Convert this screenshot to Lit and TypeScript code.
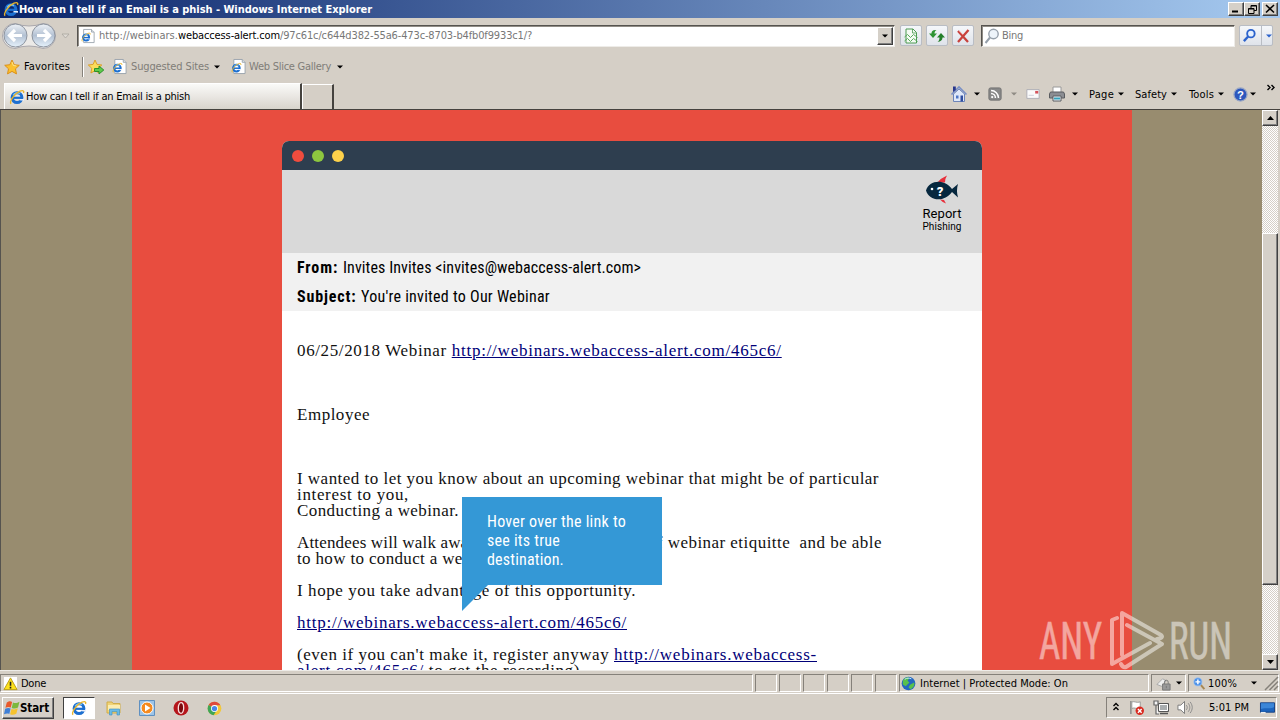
import { LitElement, html, svg, css, unsafeCSS } from 'lit';
import { customElement, property } from 'lit/decorators.js';
import { styleMap } from 'lit/directives/style-map.js';

const FONTS = {
  ui: '11px "DejaVu Sans Condensed", "DejaVu Sans", sans-serif',
  uiBold: 'bold 11px "DejaVu Sans Condensed", "DejaVu Sans", sans-serif',
  startFont: 'bold 11.5px "DejaVu Sans Condensed", "DejaVu Sans", sans-serif',
  mail: '16px "Roboto Condensed", "Liberation Sans Narrow", Roboto, sans-serif',
  mailBold: 'bold 16px "Roboto Condensed", "Liberation Sans Narrow", Roboto, sans-serif',
  serif: '17px "Liberation Serif", serif',
  roboto: '13px Roboto, sans-serif',
  robotoSmall: '10px Roboto, sans-serif',
};

type FontName = keyof typeof FONTS;

const ctx = document.createElement('canvas').getContext('2d')!;

// Text set to an exact width by spreading the difference over its letters.
const fit = (text: string, width: number, font: FontName = 'ui', cls = '') => {
  ctx.font = FONTS[font];
  const spacing = (width - ctx.measureText(text).width) / text.length;
  return html`<span
    class="fit ${font} ${cls}"
    style=${styleMap({ letterSpacing: `${spacing.toFixed(3)}px` })}
    >${text}</span
  >`;
};

// A slot of a toolbar row: fixed width, content at its left edge.
const cell = (width: number, content: unknown = '') =>
  html`<span class="cell" style=${styleMap({ width: `${width}px` })}>${content}</span>`;

const ieMark = svg`
  <circle cx="8" cy="8.600" r="4.900" fill="none" stroke="#1c6fd0" stroke-width="3" />
  <path d="M4 8.800h9" stroke="#1c6fd0" stroke-width="2.200" />
  <path d="M10.500 10.100h4.500v1.600l-4.500-.4z" fill="#e8eefa" />
  <path d="M4.200 6.400A4.800 4.800 0 0 1 11 4.600" fill="none" stroke="#7cc4f5" stroke-width="1.400" />
  <path d="M2 14.800C.2 12.500 5 4.800 11 2.200c2.700-1.200 4.500-.5 3.500 1.800" fill="none" stroke="#e9b52c" stroke-width="1.400" />`;

const ICONS = {
  ie: ieMark,
  iePage: svg`
    <path d="M3 .5h9l3 3v12H3z" fill="#fff" stroke="#9aa3ad" />
    <path d="M12 .5v3h3" fill="#dfe6ee" stroke="#9aa3ad" />
    <g transform="translate(0 3.500) scale(.72)">${ieMark}</g>`,
  star: svg`<path d="M8 1l2.200 4.700 5.100.6-3.800 3.500 1 5.100L8 12.400l-4.500 2.500 1-5.100L.7 6.300l5.100-.6z" fill="#fbc02e" stroke="#d98a10" stroke-width=".9" /><path d="M8 3l1.300 3.500 3 .4" fill="none" stroke="#fde38a" />`,
  starAdd: svg`
    <path d="M7 1l2 4.400 4.800.6-3.600 3.300.9 4.700L7 11.700 2.900 14l.9-4.700L.3 6l4.800-.6z" fill="#fbdc5a" stroke="#d99a20" stroke-width=".9" />
    <path d="M6.500 9.500h4.500V7l4.800 4-4.800 4v-2.500H6.500z" fill="#5fca4c" stroke="#218a22" stroke-width=".9" />`,
  compat: svg`
    <path d="M3 1h7l3.500 3.500V15H3z" fill="#f4fbf3" stroke="#4c9a52" />
    <path d="M9.500 1v4h4" fill="none" stroke="#4c9a52" stroke-width=".8" />
    <path d="M1.500 9l3-2.500 3 3 3-3 4 3M1.500 13l3-2.500 3 3 3-3 4 3" fill="none" stroke="#58a95d" />`,
  refresh: svg`
    <path d="M0 5.500L4 10l4-4.500H5.500c0-2 1-3 2-3.500C4 1.500 2.500 3 2.500 5.500z" fill="#2f9434" />
    <path d="M16 9.500L12 5 8 9.500h2.500c0 2.500-.6 3.500-2 4.500 3.400-.5 5-2 5-4.500z" fill="#247f2a" />`,
  stop: svg`<path d="M3 3l10 11M13.500 2L3 14" stroke="#c8423d" stroke-width="2.300" fill="none" /><path d="M4 3l4 4" stroke="#ec8d87" />`,
  lens: svg`
    <circle cx="9.500" cy="6" r="4.700" fill="#eef4fa" stroke="#96a0ab" stroke-width="1.400" />
    <path d="M6 9.500L1.500 15" stroke="#96a0ab" stroke-width="2" />`,
  lensBlue: svg`
    <circle cx="9.500" cy="6" r="4" fill="#e5f0ff" stroke="#2b62cc" stroke-width="2" />
    <path d="M6.500 9L2 14" stroke="#2b62cc" stroke-width="2.500" />`,
  home: svg`
    <path d="M2.500 8v7.500h11V8L8 3z" fill="#dfe8f8" stroke="#6d84b8" />
    <path d="M.5 8.500L8 1l7.500 7.500" fill="none" stroke="#7990c6" stroke-width="1.600" />
    <path d="M2 .5h2.800V4L2 6z" fill="#27378d" />
    <path d="M5 9.500h2.500v3H5z" fill="#4e77c5" /><path d="M9.500 9.500H12v6H9.500z" fill="#2f4da0" />`,
  rss: svg`
    <rect x="1" y="1" width="14" height="14" rx="2" fill="#898989" stroke="#6d6d6d" />
    <circle cx="4.800" cy="11.500" r="1.300" fill="#fff" />
    <path d="M3.500 7.500a5 5 0 0 1 5 5M3.500 4a8.500 8.500 0 0 1 8.500 8.500" fill="none" stroke="#fff" stroke-width="1.700" />`,
  mail: svg`
    <path d="M1 3h14v10H1z" fill="#fafafa" stroke="#a9a9b2" />
    <path d="M10.500 4.500H14v3h-3.500z" fill="#d4525a" /><path d="M3 9.500h6" stroke="#c9ccd6" />`,
  print: svg`
    <path d="M4 1h8v6H4z" fill="#fff" stroke="#999" />
    <path d="M1.500 6h13l1 2v4H.5V8z" fill="#8b8d92" stroke="#5a5c60" />
    <path d="M4 10h8v5H4z" fill="#eaf4fb" stroke="#5a5c60" /><path d="M5 12.500h6" stroke="#35a0b8" stroke-width="2" />`,
  help: svg`
    <circle cx="8" cy="8" r="7" fill="#2d57bd" stroke="#9aa7c4" stroke-width="1.300" />
    <text x="8" y="12.500" text-anchor="middle" font-size="12" font-weight="bold" fill="#fff" font-family="Liberation Sans">?</text>`,
  warn: svg`
    <path d="M1 1h14v14H1z" fill="#fff" /><path d="M8 2l7 12.500H1z" fill="#fde11c" stroke="#b99a10" />
    <path d="M8 6v4.500M8 11.500v1.800" stroke="#222" stroke-width="1.700" />`,
  globe: svg`
    <circle cx="8" cy="8" r="7.300" fill="#2467c0" />
    <path d="M2 5c2-4 6-4 7-3l-2 3 2 2-4 4-3-2zM10 9l4-2c1 3-1 6-4 7l-2-2z" fill="#58c14b" />
    <path d="M4 3.500C6 2 9 2 11 3" stroke="#c9ecff" fill="none" />`,
  lock: svg`
    <path d="M1 9l6-6 4 2-5 6z" fill="#eee" stroke="#a4a4a4" />
    <path d="M7 8.500h8V15H7z" fill="#999" stroke="#777" /><path d="M9 8.500V6.500a2 2 0 0 1 4 0v2M11 10.500v2.500" fill="none" stroke="#777" />`,
  zoom: svg`
    <path d="M9 9l5 6" stroke="#a88855" stroke-width="2.400" />
    <circle cx="6" cy="6" r="5" fill="#4c91e8" stroke="#a5c4ea" />
    <path d="M6 3v6M3 6h6" stroke="#fff" stroke-width="1.800" />`,
  flagWin: svg`
    <path d="M2.800 2.500c2.500-1.700 4-1.300 5.300-.6L6.800 7.500c-1.800-.8-3.300-.7-5.400.3z" fill="#e8592b" />
    <path d="M9 2.500c2 .8 4 .8 6.500-.8L14 7.400c-2 1.300-4 1.500-6.300.5z" fill="#7cb83c" />
    <path d="M1.200 8.800c2.200-1 3.700-1 5.400-.3l-1.300 5.400c-1.900-.8-3.400-.6-5.300.4z" fill="#3f7fd6" />
    <path d="M7.500 8.900c2.200.8 4.200.6 6.300-.6l-1.500 5.400c-2.200 1.300-4.200 1.300-6.200.5z" fill="#f6c32e" />`,
  folder: svg`
    <path d="M1 2h5l1 1.500h7V13H1z" fill="#f0d377" stroke="#d0ad49" />
    <path d="M2 5h12v5H2z" fill="#fbedb2" />
    <path d="M3.500 15V9h10v6h-2.500v-3.500H6V15z" fill="#6bbbe6" stroke="#3a8fc2" stroke-width=".6" />`,
  media: svg`
    <path d="M.5.5h15v15H.5z" fill="#9cc4e8" stroke="#5f90c1" />
    <circle cx="8" cy="8" r="6" fill="#f58a1f" stroke="#fff" /><path d="M6 4.500l5.500 3.500L6 11.500z" fill="#fff" />`,
  opera: svg`
    <circle cx="8" cy="8" r="7.500" fill="#b5161b" />
    <ellipse cx="8" cy="8" rx="2.700" ry="5.300" fill="#7b090c" stroke="#f9dede" stroke-width="1.300" />`,
  chrome: svg`
    <circle cx="8" cy="8" r="7.300" fill="#f2c83a" />
    <path d="M8 8L1.700 4.300A7.300 7.300 0 0 1 14.300 4.500H8z" fill="#df4a3c" />
    <path d="M8 8L1.700 4.300A7.300 7.300 0 0 0 7 15.200l3.500-5.500z" fill="#3fa556" />
    <circle cx="8" cy="8" r="3.700" fill="#fff" /><circle cx="8" cy="8" r="2.800" fill="#4a86e8" />`,
  chevronUp: svg`<path d="M5.500 6L8 3.500 10.500 6M5.500 10L8 7.500l2.500 2.500" fill="none" stroke="#000" stroke-width="1.400" />`,
  flag: svg`
    <path d="M2 1v14" stroke="#888" stroke-width="1.500" />
    <path d="M3 2c3-1 5 1.500 9 0v7c-4 1-6-1.500-9 0z" fill="#fff" stroke="#999" />
    <circle cx="11.500" cy="11.500" r="4.500" fill="#d92a20" /><path d="M9.500 9.500l4 4M13.500 9.500l-4 4" stroke="#fff" stroke-width="1.500" />`,
  network: svg`
    <path d="M5.500 3.500h10v8h-10z" fill="#a9adaf" stroke="#555" /><path d="M6.500 4.500h8v6h-8z" fill="none" stroke="#fff" />
    <path d="M1 1v4h4V1zM3 5v9h3" fill="#f4f4f4" stroke="#666" stroke-width="1.200" /><path d="M7 13.500h8" stroke="#555" stroke-width="1.500" />`,
  volume: svg`
    <path d="M1 5.500h3L8 1.500v13l-4-4H1z" fill="#fff" stroke="#777" />
    <path d="M10 5.500c1.200 1.500 1.200 3.500 0 5M12 3.500c2.200 3 2.200 6 0 9M14 2c3 4 3 8 0 12" fill="none" stroke="#888" />`,
  desktop: svg`
    <path d="M.5 3h15v10H.5z" fill="#1c64bd" stroke="#123e82" />
    <path d="M1 3.500h14v4c-5 3-9 0-14 2z" fill="#3b86d8" /><path d="M1 13.500h5" stroke="#eee" stroke-width="1.500" />`,
};

type IconName = keyof typeof ICONS;

const icon = (name: IconName, size = 16) =>
  html`<svg class="icon" width=${size} height=${size} viewBox="0 0 16 16">${ICONS[name]}</svg>`;

const arrow = (fill = '#000') =>
  html`<svg class="icon" width="6" height="4" viewBox="0 0 6 4"><path d="M0 .5h6L3 3.500z" fill=${fill} /></svg>`;

const textStyles = css`
  .fit {
    white-space: pre;
    flex: none;
  }

  .cell {
    display: flex;
    align-items: center;
    flex: none;
  }

  .icon {
    display: block;
    flex: none;
    overflow: visible;
  }

  .raised {
    box-sizing: border-box;
    background: #d5d0c8;
    border: 1px solid;
    border-color: #fff #404040 #404040 #fff;
    box-shadow: inset -1px -1px 0 #808080;
    display: flex;
    align-items: center;
    justify-content: center;
    flex: none;
  }

  ${unsafeCSS(
    Object.entries(FONTS)
      .map(([name, font]) => `.${name} { font: ${font}; }`)
      .join('\n')
  )}
`;

@customElement('browser-chrome')
export class BrowserChrome extends LitElement {
  static styles = [
    textStyles,
    css`
      :host {
        display: block;
        height: 110px;
        background: #d5cfc6;
      }

      .title {
        height: 18px;
        display: flex;
        align-items: center;
        padding: 0 2px 0 3px;
        color: #fff;
        background: linear-gradient(90deg, #0a246a, #a6caf0);
      }

      .grow {
        flex: 1;
      }

      .win {
        width: 16px;
        height: 14px;
      }

      .win.close {
        margin-left: 2px;
      }

      .nav {
        height: 35px;
        display: flex;
        align-items: center;
      }

      .box {
        box-sizing: border-box;
        height: 22px;
        display: flex;
        align-items: center;
        background: #fff;
        border: 1px solid;
        border-color: #55534f #eeece8 #eeece8 #55534f;
        box-shadow: inset 1px 1px 0 #918d86;
        color: #777;
        flex: none;
      }

      .address {
        width: 818px;
        padding: 0 1px 0 3px;
      }

      .search {
        width: 254px;
        padding-left: 2px;
      }

      .domain {
        color: #000;
      }

      .drop {
        width: 16px;
        height: 18px;
      }

      .tool {
        box-sizing: border-box;
        width: 22px;
        height: 21px;
        border: 1px solid #b9bdc4;
        border-radius: 2px;
        background: linear-gradient(#f5f7fa, #dfe3ea);
        display: flex;
        align-items: center;
        justify-content: center;
      }

      .tool.go {
        width: 34px;
        justify-content: flex-start;
        gap: 4px;
        padding-left: 2px;
      }

      .split {
        width: 1px;
        height: 19px;
        background: #b9bdc4;
      }

      .favorites {
        height: 27px;
        display: flex;
        align-items: center;
        padding: 0 0 1px 4px;
      }

      .muted {
        color: #807d78;
      }

      .rule {
        width: 1px;
        height: 20px;
        background: #85817a;
        border-right: 1px solid #fff;
      }

      .tabs {
        height: 28px;
        display: flex;
        align-items: flex-end;
        border-bottom: 1px solid #45423e;
        padding-left: 4px;
      }

      .tab {
        box-sizing: border-box;
        width: 298px;
        height: 26px;
        display: flex;
        align-items: center;
        gap: 1px;
        padding-left: 4px;
        background: linear-gradient(#fafaf8, #e6e3de 60%, #d8d4cc);
        border: 1px solid #fff;
        border-right: 2px solid #45423e;
        border-bottom: 0;
      }

      .tab.new {
        width: 32px;
        height: 25px;
        background: #d5cfc6;
      }

      .commands {
        display: flex;
        align-items: center;
        height: 30px;
        padding-left: 617px;
      }

      .more {
        align-self: flex-start;
        height: 17px;
      }
    `,
  ];

  render() {
    return html`
      <div class="title">
        ${cell(16, icon('ie'))} ${fit('How can I tell if an Email is a phish - Windows Internet Explorer', 353, 'uiBold')}
        <span class="grow"></span>
        <span class="raised win"><svg class="icon" width="8" height="8"><path d="M0 6.500h6" stroke="#000" stroke-width="2" /></svg></span>
        <span class="raised win"
          ><svg class="icon" width="9" height="9"><path d="M3 3.500V.5h5.500v5H6M3 1h5.500M.5 3.500H6v5H.5zM.5 4H6" fill="none" stroke="#000" /></svg
        ></span>
        <span class="raised win close"><svg class="icon" width="8" height="8"><path d="M0 0l8 7.500M8 0L0 7.500" stroke="#000" stroke-width="1.600" /></svg></span>
      </div>

      <div class="nav">
        ${cell(
          77,
          html`<svg class="icon" width="76" height="30" viewBox="0 0 76 30">
            <defs>
              <linearGradient id="orb" x2="0" y2="1">
                <stop offset="0" stop-color="#eef2f7" /><stop offset=".5" stop-color="#b3c1d3" /><stop offset="1" stop-color="#e6f2fc" />
              </linearGradient>
            </defs>
            <path d="M15 2.500q14 5 28 0a12.500 12.500 0 0 1 0 25q-14-5-28 0a12.500 12.500 0 0 1 0-25z" fill="#eceae7" stroke="#aaa8ad" />
            <circle cx="15.500" cy="14.500" r="11.500" fill="url(#orb)" stroke="#8d949f" />
            <circle cx="43.500" cy="14.500" r="11.500" fill="url(#orb)" stroke="#8d949f" />
            <path d="M22 14.500H10M15 9l-5.500 5.500L15 20M37 14.500h12M44 9l5.500 5.500L44 20" fill="none" stroke="#fff" stroke-width="3.200" />
            <path d="M62 13h7l-3.500 4z" fill="#dedad4" stroke="#aaa69f" stroke-width=".8" />
          </svg>`
        )}
        <div class="box address">
          ${cell(18, icon('iePage', 14))} ${fit('http://webinars.', 79)}${fit('webaccess-alert.com', 102, 'ui', 'domain')}${fit(
            '/97c61c/c644d382-55a6-473c-8703-b4fb0f9933c1/?',
            252
          )}
          <span class="grow"></span>
          <span class="raised drop">${arrow()}</span>
        </div>
        ${cell(5)} ${cell(26, html`<span class="tool">${icon('compat')}</span>`)}
        ${cell(26, html`<span class="tool">${icon('refresh')}</span>`)}
        ${cell(29, html`<span class="tool">${icon('stop')}</span>`)}
        <div class="box search">${cell(18, icon('lens'))} ${fit('Bing', 21)}</div>
        ${cell(4)}
        <span class="tool go">${icon('lensBlue', 15)}<span class="split"></span>${arrow('#2b62cc')}</span>
      </div>

      <div class="favorites">
        ${cell(20, icon('star'))} ${cell(58, fit('Favorites', 46))} ${cell(6, html`<span class="rule"></span>`)}
        ${cell(24, icon('starAdd'))} ${cell(19, icon('iePage', 15))} ${cell(83, fit('Suggested Sites', 78, 'ui', 'muted'))}
        ${cell(17, arrow())} ${cell(18, icon('iePage', 15))} ${cell(88, fit('Web Slice Gallery', 82, 'ui', 'muted'))} ${arrow()}
      </div>

      <div class="tabs">
        <div class="tab">${icon('ie')}${fit('How can I tell if an Email is a phish', 164)}</div>
        <div class="tab new"></div>
        <div class="commands">
          ${cell(23, icon('home'))} ${cell(14, arrow())} ${cell(23, icon('rss', 14))} ${cell(15, arrow('#8f8b84'))}
          ${cell(23, icon('mail', 14))} ${cell(23, icon('print'))} ${cell(17, arrow())} ${cell(29, fit('Page', 25))}
          ${cell(17, arrow())} ${cell(36, fit('Safety', 32))} ${cell(18, arrow())} ${cell(29, fit('Tools', 25))}
          ${cell(15, arrow())} ${cell(17, icon('help', 15))} ${cell(17, arrow())}
          <span class="cell more"
            ><svg class="icon" width="8" height="7"><path d="M.5 1L3 3.500.5 6M4.500 1L7 3.500 4.500 6" fill="none" stroke="#000" stroke-width="1.400" /></svg
          ></span>
        </div>
      </div>
    `;
  }
}

@customElement('mail-page')
export class MailPage extends LitElement {
  static styles = [
    textStyles,
    css`
      :host {
        display: grid;
        grid-template-columns: 1000px;
        justify-content: start;
        box-sizing: border-box;
        width: 1262px;
        height: 560px;
        padding-left: 131px;
        border-left: 1px solid #55534f;
        background: #988c6f;
        overflow: hidden;
        position: relative;
      }

      .stage {
        background: #e84d3f;
        padding: 31px 150px 0;
        height: 529px;
      }

      .window {
        background: #fff;
        border-radius: 7px 7px 0 0;
        overflow: hidden;
        height: 529px;
      }

      .bar {
        height: 29px;
        background: #2e3e4f;
        display: flex;
        align-items: center;
        gap: 8px;
        padding-left: 10px;
      }

      .dot {
        width: 12px;
        height: 12px;
        border-radius: 50%;
      }

      .red {
        background: #f04c3e;
      }

      .green {
        background: #8dc63f;
      }

      .yellow {
        background: #fdd14b;
      }

      .ribbon {
        height: 83px;
        box-sizing: border-box;
        background: #d9d9d9;
        display: flex;
        justify-content: flex-end;
        padding: 5px 20px 0 0;
      }

      .report {
        display: flex;
        flex-direction: column;
        align-items: center;
        width: 40px;
        color: #000;
      }

      .report .roboto {
        line-height: 15px;
        margin-top: 2px;
      }

      .report .robotoSmall {
        line-height: 11px;
      }

      .headers {
        height: 58px;
        background: #f1f1f1;
        padding-left: 15px;
      }

      .header {
        height: 29px;
        display: flex;
        align-items: center;
      }

      .body {
        padding: 32px 15px 0;
      }

      .line {
        height: 16px;
        line-height: 16px;
        white-space: pre;
        display: flex;
        align-items: center;
        color: #111;
      }

      .line .serif {
        line-height: 16px;
      }

      .link {
        color: #000078;
        text-decoration: underline;
        text-decoration-thickness: 1px;
        text-underline-offset: 1px;
      }

      .tip {
        position: absolute;
        left: 461px;
        top: 387px;
        width: 200px;
        height: 88px;
        box-sizing: border-box;
        padding: 15px 25px;
        background: #3498d6;
        color: #fff;
      }

      .tip .fit {
        display: block;
        line-height: 19px;
      }

      .tail {
        position: absolute;
        left: 0;
        top: 88px;
      }

      .watermark {
        position: absolute;
        left: 1034px;
        top: 495px;
        overflow: visible;
      }
    `,
  ];

  // Each body line is a list of [text, width, is link]; an empty list is a blank line.
  lines: [string, number, boolean?][][] = [
    [['06/25/2018 Webinar ', 155], ['http://webinars.webaccess-alert.com/465c6/', 330, true]],
    [],
    [],
    [],
    [['Employee', 73]],
    [],
    [],
    [],
    [['I wanted to let you know about an upcoming webinar that might be of particular', 582]],
    [['interest to you,', 112]],
    [['Conducting a webinar.', 162]],
    [],
    [['Attendees will walk away', 180], [' with an understanding of', 186], [' webinar etiquitte  and be able', 219]],
    [['to how to conduct a webinar.', 206]],
    [],
    [['I hope you take advantage of this opportunity.', 339]],
    [],
    [['http://webinars.webaccess-alert.com/465c6/', 330, true]],
    [],
    [["(even if you can't make it, register anyway ", 317], ['http://webinars.webaccess-', 203, true]],
    [['alert.com/465c6/', 127, true], [' to get the recording)', 156]],
  ];

  render() {
    return html`
      <div class="stage">
        <div class="window">
          <div class="bar"><span class="dot red"></span><span class="dot green"></span><span class="dot yellow"></span></div>
          <div class="ribbon">
            <div class="report">
              <svg class="icon" width="34" height="29" viewBox="0 0 34 29">
                <path d="M12.500 7.500Q16 3 22 .5q-2 3-2 7zM15 24.500l4 .5 2 3.500q-3.500-1-6-4z" fill="#e8303c" />
                <path d="M1 15.500C4 5 19 3 27 14L33 9q-2 6.500 0 13.500l-6-5.500C19 28 4 26 1 15.500z" fill="#07283f" />
                <circle cx="7" cy="14" r="1.300" fill="#fff" />
                <text x="15" y="20.500" text-anchor="middle" font-family="Roboto" font-size="13" font-weight="900" fill="#fff">?</text>
              </svg>
              ${fit('Report', 39, 'roboto')} ${fit('Phishing', 39, 'robotoSmall')}
            </div>
          </div>
          <div class="headers">
            <div class="header">${fit('From: ', 46, 'mailBold')}${fit('Invites Invites <invites@webaccess-alert.com>', 298, 'mail')}</div>
            <div class="header">${fit('Subject: ', 64, 'mailBold')}${fit("You're invited to Our Webinar", 189, 'mail')}</div>
          </div>
          <div class="body">
            ${this.lines.map(
              (line) => html`<div class="line">${line.map(([text, width, link]) => fit(text, width, 'serif', link ? 'link' : ''))}</div>`
            )}
          </div>
        </div>
      </div>
      <div class="tip">
        ${fit('Hover over the link to', 139, 'mail')} ${fit('see its true', 73, 'mail')} ${fit('destination.', 77, 'mail')}
        <svg class="tail" width="26" height="26"><path d="M0 0h26L0 26z" fill="#3498d6" /></svg>
      </div>
      <svg class="watermark" width="200" height="66" viewBox="1035 605 200 66">
        <g opacity=".5" fill="#fff" stroke="#fff" stroke-width=".5" font-family="'Roboto Condensed', 'Liberation Sans Narrow', Roboto" font-size="51">
          <text x="1039" y="659" textLength="63" lengthAdjust="spacingAndGlyphs">ANY</text>
          <text x="1169" y="659" textLength="63" lengthAdjust="spacingAndGlyphs">RUN</text>
        </g>
        <path
          d="M1117 618l-5 2v44l38-21M1122 655v-42l39 22q3 3-4 4M1127 625l35 19-36 23q-3 1-5-3"
          fill="none" stroke="#fff" stroke-opacity=".5" stroke-width="4" stroke-linejoin="round" stroke-linecap="round" />
      </svg>
    `;
  }
}

@customElement('scroll-bar')
export class ScrollBar extends LitElement {
  @property({ type: Number }) offset = 107;
  @property({ type: Number }) size = 352;

  static styles = [
    textStyles,
    css`
      :host {
        display: flex;
        flex-direction: column;
        width: 16px;
        height: 560px;
        background: repeating-conic-gradient(#fff 0 25%, #d5d0c8 0 50%) 0 0 / 2px 2px;
      }

      .end {
        width: 16px;
        height: 16px;
      }

      .grow {
        flex: 1;
      }
    `,
  ];

  render() {
    return html`
      <div class="raised end"><svg class="icon" width="7" height="4"><path d="M0 4L3.500 0 7 4z" /></svg></div>
      <div style=${styleMap({ height: `${this.offset}px` })}></div>
      <div class="raised" style=${styleMap({ height: `${this.size}px` })}></div>
      <div class="grow"></div>
      <div class="raised end"><svg class="icon" width="7" height="4"><path d="M0 0h7L3.500 4z" /></svg></div>
    `;
  }
}

@customElement('status-bar')
export class StatusBar extends LitElement {
  static styles = [
    textStyles,
    css`
      :host {
        display: flex;
        box-sizing: border-box;
        height: 23px;
        padding-top: 3px;
        gap: 2px;
        background: #d5cfc6;
        border-top: 1px solid #eeece8;
      }

      .pane {
        box-sizing: border-box;
        height: 18px;
        display: flex;
        align-items: center;
        border: 1px solid;
        border-color: #85817a #fff #fff #85817a;
        flex: none;
      }

      .done {
        width: 753px;
        padding-left: 2px;
      }

      .small {
        width: 22px;
      }

      .zone {
        width: 250px;
        padding-left: 1px;
      }

      .lock {
        width: 35px;
        padding-left: 4px;
      }

      .zoom {
        width: 91px;
        padding-left: 4px;
      }
    `,
  ];

  render() {
    return html`
      <div class="pane done">${cell(18, icon('warn', 15))} ${fit('Done', 25)}</div>
      ${[0, 1, 2, 3, 4, 5].map(() => html`<div class="pane small"></div>`)}
      <div class="pane zone">${cell(19, icon('globe', 15))} ${fit('Internet | Protected Mode: On', 148)}</div>
      <div class="pane lock">${cell(20, icon('lock', 15))} ${arrow()}</div>
      <div class="pane zoom">
        ${cell(15, icon('zoom', 13))} ${cell(43, fit('100%', 29))} ${cell(14, arrow())}
        <svg class="icon" width="13" height="13"><path d="M0 13L13 0M4.500 13L13 4.500M9 13l4-4" stroke="#85817a" stroke-width="1.500" /></svg>
      </div>
    `;
  }
}

@customElement('task-bar')
export class TaskBar extends LitElement {
  static styles = [
    textStyles,
    css`
      :host {
        display: flex;
        box-sizing: border-box;
        height: 27px;
        padding: 3px 3px 0 2px;
        background: #d5cfc6;
        border-top: 1px solid #fff;
      }

      .start {
        width: 52px;
        height: 22px;
        padding-right: 3px;
      }

      .active {
        box-sizing: border-box;
        width: 32px;
        height: 22px;
        margin: 0 11px 0 9px;
        display: flex;
        align-items: center;
        justify-content: center;
        background: #fff;
        border: 1px solid;
        border-color: #404040 #fff #fff #404040;
      }

      .launch {
        display: flex;
        align-items: center;
        height: 22px;
      }

      .grow {
        flex: 1;
      }

      .tray {
        box-sizing: border-box;
        width: 171px;
        height: 21px;
        display: flex;
        align-items: center;
        padding-left: 1px;
        border: 1px solid;
        border-color: #85817a #fff #fff #85817a;
      }
    `,
  ];

  render() {
    return html`
      <div class="raised start">${icon('flagWin')}${fit('Start', 29, 'startFont')}</div>
      <div class="active">${icon('ie')}</div>
      <div class="launch">
        ${cell(33, icon('folder'))} ${cell(34, icon('media'))} ${cell(34, icon('opera'))} ${icon('chrome', 15)}
      </div>
      <span class="grow"></span>
      <div class="tray">
        ${cell(21, icon('chevronUp'))} ${cell(24, icon('flag', 15))} ${cell(24, icon('network'))}
        ${cell(32, icon('volume', 15))} ${cell(51, fit('5:01 PM', 40))} ${icon('desktop', 15)}
      </div>
    `;
  }
}

@customElement('app-root')
export class AppRoot extends LitElement {
  static styles = css`
    :host {
      display: grid;
      grid-template-rows: 110px 560px 23px 27px;
      width: 1280px;
      height: 720px;
      overflow: hidden;
      background: #d5cfc6;
    }

    .viewport {
      display: flex;
    }
  `;

  render() {
    return html`
      <browser-chrome></browser-chrome>
      <div class="viewport">
        <mail-page></mail-page>
        <scroll-bar></scroll-bar>
      </div>
      <status-bar></status-bar>
      <task-bar></task-bar>
    `;
  }
}

declare global {
  interface HTMLElementTagNameMap {
    'app-root': AppRoot;
    'browser-chrome': BrowserChrome;
    'mail-page': MailPage;
    'scroll-bar': ScrollBar;
    'status-bar': StatusBar;
    'task-bar': TaskBar;
  }
}
